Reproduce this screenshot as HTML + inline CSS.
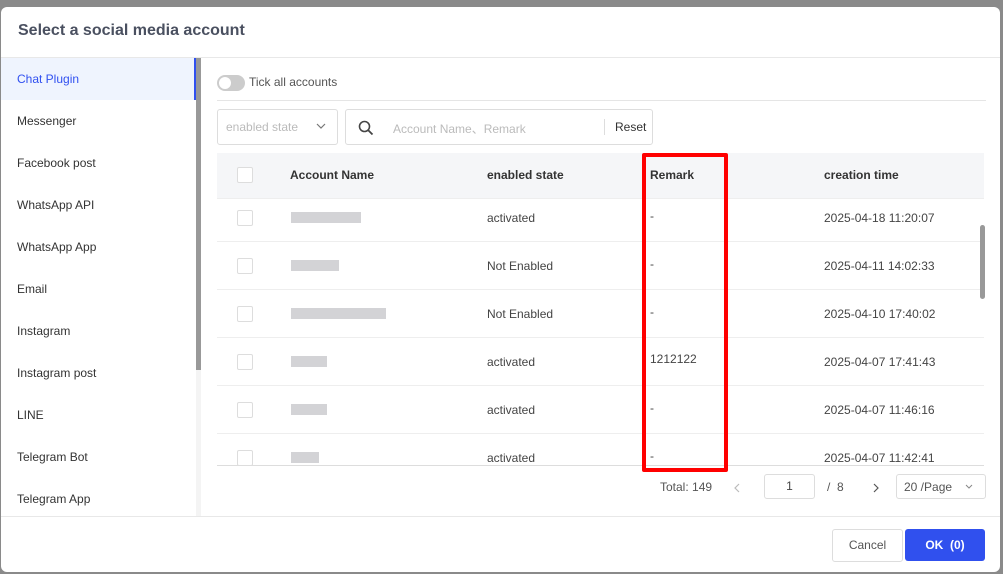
<html><head><style>
body{margin:0;width:1003px;height:574px;background:#8a8a8a;font-family:"Liberation Sans",sans-serif;position:relative;overflow:hidden;font-size:12px;color:#444}
.dlg{position:absolute;left:1px;top:7px;width:999px;height:565px;background:#fff;border-radius:6px;overflow:hidden}
.a{position:absolute}
.title{left:17px;top:15px;font-size:16px;font-weight:bold;color:#4a5060}
.side div{position:absolute;left:0;width:194px;height:42px;line-height:42px;padding-left:16px;box-sizing:border-box;color:#333}
.cb{position:absolute;width:14px;height:14px;border:1px solid #ddd;border-radius:2px;background:#fff}
.blur{position:absolute;height:11px;background:#c8c8cc;opacity:.8}
.row{position:absolute;left:216px;width:767px;border-bottom:1px solid #eee}
</style></head><body>
<div class="dlg">
<div class="a title">Select a social media account</div>
<div class="a" style="left:0;top:50px;width:999px;border-top:1px solid #e8e8e8"></div>
<div class="side">
<div style="top:51px;background:#eff4fe;color:#3050f0">Chat Plugin</div>
<div style="top:93px">Messenger</div><div style="top:135px">Facebook post</div><div style="top:177px">WhatsApp API</div><div style="top:219px">WhatsApp App</div><div style="top:261px">Email</div><div style="top:303px">Instagram</div><div style="top:345px">Instagram post</div><div style="top:387px">LINE</div><div style="top:429px">Telegram Bot</div><div style="top:471px">Telegram App</div>
</div>
<div class="a" style="left:193px;top:51px;width:2px;height:42px;background:#3050f0"></div>
<div class="a" style="left:195px;top:51px;width:5px;height:458px;background:#f4f4f4"></div>
<div class="a" style="left:195px;top:51px;width:5px;height:312px;background:#999"></div>
<div class="a" style="left:216px;top:68px;width:28px;height:16px;border-radius:8px;background:#ccc"></div>
<div class="a" style="left:218px;top:70px;width:12px;height:12px;border-radius:6px;background:#fff"></div>
<div class="a" style="left:248px;top:68px;color:#555;font-size:12px">Tick all accounts</div>
<div class="a" style="left:216px;top:93px;width:769px;border-top:1px solid #e5e5e5"></div>
<div class="a" style="left:216px;top:102px;width:119px;height:34px;border:1px solid #ddd;border-radius:3px"></div>
<div class="a" style="left:225px;top:113px;color:#bbb">enabled state</div>
<svg class="a" style="left:315px;top:116px" width="10" height="6"><path d="M1 1l4 4 4-4" fill="none" stroke="#777" stroke-width="1.2"/></svg>
<div class="a" style="left:344px;top:102px;width:306px;height:34px;border:1px solid #ddd;border-radius:3px"></div>
<svg class="a" style="left:357px;top:113px" width="16" height="16"><circle cx="6.5" cy="6.5" r="5" fill="none" stroke="#444" stroke-width="1.6"/><path d="M10 10l4.5 4.5" stroke="#444" stroke-width="1.8"/></svg>
<div class="a" style="left:392px;top:113px;color:#bbb">Account Name、Remark</div>
<div class="a" style="left:603px;top:112px;height:16px;border-left:1px solid #ddd"></div>
<div class="a" style="left:614px;top:113px;color:#333">Reset</div>
<div class="a" style="left:216px;top:146px;width:767px;height:45px;background:#f5f6f8;border-bottom:1px solid #eee"></div>
<div class="cb" style="left:236px;top:160px"></div>
<div class="a" style="left:289px;top:161px;font-weight:bold;color:#333">Account Name</div>
<div class="a" style="left:486px;top:161px;font-weight:bold;color:#333">enabled state</div>
<div class="a" style="left:649px;top:161px;font-weight:bold;color:#333">Remark</div>
<div class="a" style="left:823px;top:161px;font-weight:bold;color:#333">creation time</div>
<div class="row" style="top:191px;height:43px"></div>
<div class="row" style="top:235px;height:47px"></div>
<div class="row" style="top:283px;height:47px"></div>
<div class="row" style="top:331px;height:47px"></div>
<div class="row" style="top:379px;height:47px"></div>
<div class="a" style="left:216px;top:458px;width:767px;border-top:1px solid #ddd"></div>
<div class="cb" style="left:236px;top:203px"></div><div class="blur" style="left:290px;top:205px;width:70px"></div>
<div class="a" style="left:486px;top:204px">activated</div><div class="a" style="left:649px;top:202px">-</div><div class="a" style="left:823px;top:204px">2025-04-18 11:20:07</div>
<div class="cb" style="left:236px;top:251px"></div><div class="blur" style="left:290px;top:253px;width:48px"></div>
<div class="a" style="left:486px;top:252px">Not Enabled</div><div class="a" style="left:649px;top:250px">-</div><div class="a" style="left:823px;top:252px">2025-04-11 14:02:33</div>
<div class="cb" style="left:236px;top:299px"></div><div class="blur" style="left:290px;top:301px;width:95px"></div>
<div class="a" style="left:486px;top:300px">Not Enabled</div><div class="a" style="left:649px;top:298px">-</div><div class="a" style="left:823px;top:300px">2025-04-10 17:40:02</div>
<div class="cb" style="left:236px;top:347px"></div><div class="blur" style="left:290px;top:349px;width:36px"></div>
<div class="a" style="left:486px;top:348px">activated</div><div class="a" style="left:649px;top:345px">1212122</div><div class="a" style="left:823px;top:348px">2025-04-07 17:41:43</div>
<div class="cb" style="left:236px;top:395px"></div><div class="blur" style="left:290px;top:397px;width:36px"></div>
<div class="a" style="left:486px;top:396px">activated</div><div class="a" style="left:649px;top:394px">-</div><div class="a" style="left:823px;top:396px">2025-04-07 11:46:16</div>
<div class="cb" style="left:236px;top:443px"></div><div class="blur" style="left:290px;top:445px;width:28px"></div>
<div class="a" style="left:486px;top:444px">activated</div><div class="a" style="left:649px;top:442px">-</div><div class="a" style="left:823px;top:444px">2025-04-07 11:42:41</div>
<div class="a" style="left:979px;top:218px;width:5px;height:74px;border-radius:3px;background:#999"></div>
<div class="a" style="left:641px;top:146px;width:78px;height:311px;border:4px solid #f00;border-radius:2px"></div>
<div class="a" style="left:659px;top:473px;color:#555">Total:&nbsp;149</div>
<svg class="a" style="left:733px;top:476px" width="6" height="10"><path d="M5 1L1 5l4 4" fill="none" stroke="#bbb" stroke-width="1.2"/></svg>
<div class="a" style="left:763px;top:467px;width:49px;height:23px;border:1px solid #ddd;border-radius:3px;text-align:center;line-height:23px">1</div>
<div class="a" style="left:826px;top:473px;color:#555">/&nbsp;&nbsp;8</div>
<svg class="a" style="left:872px;top:476px" width="6" height="10"><path d="M1 1l4 4-4 4" fill="none" stroke="#555" stroke-width="1.2"/></svg>
<div class="a" style="left:895px;top:467px;width:88px;height:23px;border:1px solid #ddd;border-radius:3px"></div>
<div class="a" style="left:903px;top:473px;color:#555">20 /Page</div>
<svg class="a" style="left:964px;top:477px" width="8" height="5"><path d="M1 1l3 3 3-3" fill="none" stroke="#888" stroke-width="1"/></svg>
<div class="a" style="left:0;top:509px;width:999px;border-top:1px solid #e8e8e8"></div>
<div class="a" style="left:831px;top:522px;width:69px;height:31px;border:1px solid #ddd;border-radius:3px;text-align:center;line-height:31px;color:#555">Cancel</div>
<div class="a" style="left:904px;top:522px;width:80px;height:32px;background:#3050ee;border-radius:3px;text-align:center;line-height:32px;color:#fff;font-weight:bold">OK&nbsp;&nbsp;(0)</div>
</div>
</body></html>
